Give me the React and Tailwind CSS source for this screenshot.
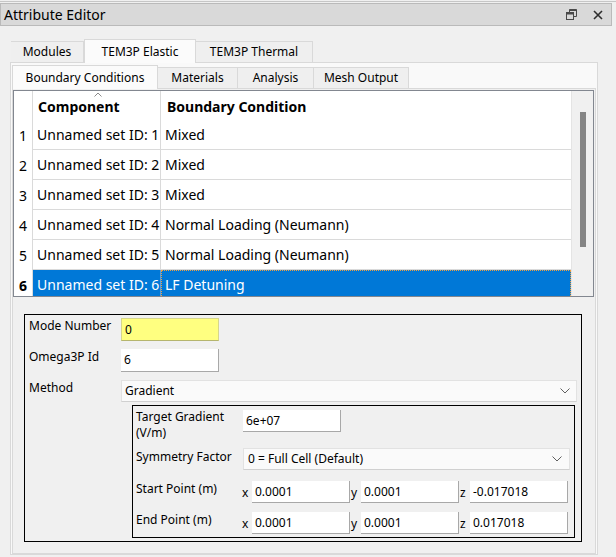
import React from "react";

const rows = [
  { id: 1, name: "Unnamed set ID: 1", bc: "Mixed" },
  { id: 2, name: "Unnamed set ID: 2", bc: "Mixed" },
  { id: 3, name: "Unnamed set ID: 3", bc: "Mixed" },
  { id: 4, name: "Unnamed set ID: 4", bc: "Normal Loading (Neumann)" },
  { id: 5, name: "Unnamed set ID: 5", bc: "Normal Loading (Neumann)" },
  { id: 6, name: "Unnamed set ID: 6", bc: "LF Detuning", selected: true },
];

function Chevron() {
  return (
    <svg width="10" height="6" viewBox="0 0 10 6">
      <path d="M0.5 0.5L5 5L9.5 0.5" fill="none" stroke="#606060" strokeWidth="1" />
    </svg>
  );
}

function Field({ value, yellow, className = "" }) {
  // qt line edit look: flat, darker bottom/right edge
  if (yellow) {
    return (
      <div className={`h-[23px] flex items-center pl-[3px] text-[12px] bg-[#ffff80] border border-[#d6d68c] border-b-[#b5b56e] ${className}`}>
        {value}
      </div>
    );
  }
  return (
    <div className={`h-[22px] flex items-center pl-[3px] text-[12px] bg-white border-b border-r border-[#a8a8a8] ${className}`}>
      {value}
    </div>
  );
}

function Combo({ value, className = "" }) {
  return (
    <div className={`h-[22px] flex items-center justify-between pl-[3px] pr-[6px] text-[12px] bg-[#fafafa] border border-[#e2e2e2] border-b-[#d0d0d0] ${className}`}>
      <span>{value}</span>
      <Chevron />
    </div>
  );
}

function Tab({ label, active, width }) {
  if (active) {
    return (
      <div
        className="h-[24px] -mb-px relative z-10 flex items-center justify-center bg-[#fbfbfb] border border-b-0 border-[#d9d9d9] text-[12px] text-black"
        style={{ width }}
      >
        {label}
      </div>
    );
  }
  return (
    <div
      className="h-[21px] flex items-center justify-center bg-[#efefef] border border-b-0 border-l-0 border-[#d9d9d9] text-[12px] text-black"
      style={{ width }}
    >
      {label}
    </div>
  );
}

function PointRow({ label, x, y, z, className = "" }) {
  return (
    <>
      <div className={`pl-[3px] text-[12px] leading-[16px] ${className}`}>{label}</div>
      <div className={`flex items-center text-[12px] ${className}`}>
        <span className="w-[11px] pl-[1px] pt-[2px]">x</span>
        <Field value={x} className="w-[98px]" />
        <span className="w-[11px] pl-[1px] pt-[2px]">y</span>
        <Field value={y} className="w-[98px]" />
        <span className="w-[11px] pl-[1px] pt-[2px]">z</span>
        <Field value={z} className="w-[98px]" />
      </div>
    </>
  );
}

export default function App() {
  return (
    <div className="w-[616px] h-[557px] overflow-hidden bg-[#f0f0f0] text-black font-['Noto_Sans',sans-serif]">
      <div className="h-[3px] pt-px">
        <div className="h-px bg-[#c6c6c6]" />
      </div>

      {/* dock title bar */}
      <div className="h-[23px] mr-[4px] bg-[#d9d9d9] border border-[#bababa] flex items-center justify-between">
        <span className="pl-[3px] text-[14px]">Attribute Editor</span>
        <div className="flex items-center gap-[16px] pr-[8px]">
          <svg width="11" height="11" viewBox="0 0 11 11">
            <path d="M3.5 3V0.5H10.5V7.5H8" fill="none" stroke="#4a4a4a" strokeWidth="1" />
            <rect x="3.5" y="0.5" width="7" height="1.5" fill="#4a4a4a" />
            <rect x="0.5" y="3.5" width="7" height="7" fill="none" stroke="#4a4a4a" strokeWidth="1" />
            <rect x="0.5" y="3.5" width="7" height="2" fill="#4a4a4a" />
          </svg>
          <svg width="10" height="10" viewBox="0 0 10 10">
            <path d="M1 1L9 9M9 1L1 9" stroke="#2e2e2e" strokeWidth="1.6" />
          </svg>
        </div>
      </div>

      {/* outer tab widget */}
      <div className="mt-[13px] ml-[10px] w-[588px]">
        <div className="flex items-end h-[23px] pl-px">
          <Tab label="Modules" width={73} />
          <Tab label="TEM3P Elastic" width={112} active />
          <Tab label="TEM3P Thermal" width={117} />
        </div>
        <div className="h-[493px] border border-[#d9d9d9] bg-[#f9f9f9] p-px">
          <div className="flex items-end h-[24px]">
            <Tab label="Boundary Conditions" width={146} active />
            <Tab label="Materials" width={80} />
            <Tab label="Analysis" width={76} />
            <Tab label="Mesh Output" width={95} />
          </div>
          <div className="h-[466px] border border-[#d9d9d9] bg-[#f0f0f0]">
            {/* table */}
            <div className="mt-px w-[581px] h-[207px] border border-[#828790] bg-white flex overflow-hidden">
              <div className="flex-1 flex flex-col overflow-hidden">
                <div className="h-[29px] shrink-0 flex text-[14px] font-bold">
                  <div className="w-[19px] border-r border-[#dadada]" />
                  <div className="w-[128px] border-r border-[#dadada] relative flex items-center pl-[5px] pt-px">
                    <svg className="absolute top-[1px] left-[61px]" width="8" height="5" viewBox="0 0 8 5">
                      <path d="M0.5 4.5L4 1L7.5 4.5" fill="none" stroke="#8a8a8a" strokeWidth="1" />
                    </svg>
                    Component
                  </div>
                  <div className="flex-1 flex items-center pl-[6px] pt-px">Boundary Condition</div>
                </div>
                {rows.map((r) => (
                  <div key={r.id} className="h-[30px] shrink-0 flex text-[14px]">
                    <div className={`w-[19px] border-r border-[#dadada] flex items-center justify-center ${r.selected ? "font-bold" : ""}`}>
                      {r.id}
                    </div>
                    <div
                      className={`w-[128px] border-r border-b flex items-center pl-[4px] ${
                        r.selected ? "bg-[#0078d7] text-white border-[#0078d7] border-r-[#5a9fdc]" : "border-[#dadada]"
                      }`}
                    >
                      {r.name}
                    </div>
                    <div
                      className={`flex-1 border-b flex items-center pl-[4px] ${
                        r.selected
                          ? "bg-[#0078d7] text-white border-[#0078d7] outline-1 outline-dotted outline-[#f0a040] -outline-offset-1"
                          : "border-[#dadada]"
                      }`}
                    >
                      {r.bc}
                    </div>
                  </div>
                ))}
              </div>
              <div className="w-[22px] bg-[#f0f0f0] border-l border-[#e4e4e4] pt-[21px] pl-[8px]">
                <div className="w-[6px] h-[135px] bg-[#858585]" />
              </div>
            </div>

            {/* attribute form */}
            <div className="mt-[17px] ml-[11px] w-[558px] h-[228px] border border-black pt-[3px] pr-[4px]">
              <div className="grid grid-cols-[96px_1fr] gap-y-[8px] items-start">
                <div className="pl-[4px] text-[12px] leading-[16px]">Mode Number</div>
                <Field value="0" yellow className="w-[98px]" />
                <div className="pl-[4px] text-[12px] leading-[16px]">Omega3P Id</div>
                <Field value="6" className="w-[98px] h-[23px]" />
                <div className="pl-[4px] text-[12px] leading-[16px]">Method</div>
                <Combo value="Gradient" />
              </div>
              <div className="mt-[3px] ml-[107px] mr-[2px] h-[133px] border border-black pt-[3px]">
                <div className="grid grid-cols-[108px_1fr] items-start">
                  <div className="pl-[3px] text-[12px] leading-[16px]">
                    Target Gradient
                    <br />
                    (V/m)
                  </div>
                  <Field value="6e+07" className="w-[98px] mt-px ml-[2px]" />
                  <div className="pl-[3px] text-[12px] leading-[16px] mt-[8px]">Symmetry Factor</div>
                  <Combo value="0 = Full Cell (Default)" className="mt-[7px] ml-[2px] mr-[4px] pl-[4px] pr-[7px]" />
                  <PointRow label="Start Point (m)" x="0.0001" y="0.0001" z="-0.017018" className="mt-[11px]" />
                  <PointRow label="End Point (m)" x="0.0001" y="0.0001" z="0.017018" className="mt-[9px]" />
                </div>
              </div>
            </div>
          </div>
        </div>
      </div>
    </div>
  );
}
